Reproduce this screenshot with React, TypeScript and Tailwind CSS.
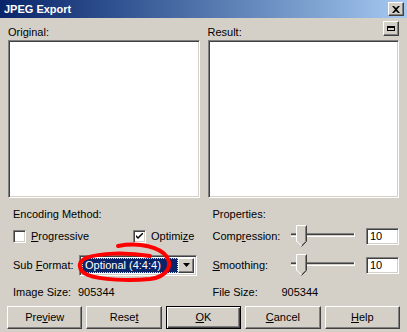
import React from 'react';

const raised =
    'bg-[#d4d0c8] border border-t-white border-l-white border-r-[#404040] border-b-[#404040] shadow-[inset_-1px_-1px_0_#808080,inset_1px_1px_0_#d4d0c8]';
const sunken =
    'bg-white border border-t-[#808080] border-l-[#808080] border-r-white border-b-white shadow-[inset_1px_1px_0_#404040,inset_-1px_-1px_0_#d4d0c8]';

function Checkbox({checked}: {checked?: boolean}) {
    return (
        <span className={`${sunken} w-[13px] h-[13px] flex items-center justify-center shrink-0`}>
            {checked && (
                <svg width="7" height="7" viewBox="0 0 7 7">
                    <path d="M0 2 L0 4 L2 6 L7 1 L7 -1 L2 4 Z" fill="#000"/>
                </svg>
            )}
        </span>
    );
}

function Slider() {
    return (
        <svg width="64" height="23" viewBox="0 0 64 23" className="shrink-0">
            {/* track */}
            <rect x="0" y="8" width="63" height="1" fill="#808080"/>
            <rect x="0" y="9" width="63" height="1" fill="#404040"/>
            <rect x="0" y="10" width="63" height="1" fill="#d4d0c8"/>
            <rect x="0" y="11" width="64" height="1" fill="#ffffff"/>
            <rect x="63" y="8" width="1" height="4" fill="#ffffff"/>
            {/* thumb */}
            <path d="M5 0 L15 0 L15 16 L10 21 L5 16 Z" fill="#d4d0c8"/>
            <path d="M5 16 L5 0 L15 0" stroke="#ffffff" strokeWidth="1" fill="none" transform="translate(0.5 0.5)"/>
            <path d="M15 0 L15 16 L10 21" stroke="#404040" strokeWidth="1" fill="none" transform="translate(0.5 0.5)"/>
            <path d="M14 1 L14 16 L10 20" stroke="#808080" strokeWidth="1" fill="none" transform="translate(0.5 0.5)"/>
            <path d="M5 16 L10 21" stroke="#ffffff" strokeWidth="1" fill="none" transform="translate(0.5 0)"/>
        </svg>
    );
}

function Button({children, isDefault}: {children: React.ReactNode; isDefault?: boolean}) {
    const cls = isDefault
        ? 'bg-[#d4d0c8] border border-black shadow-[inset_1px_1px_0_#ffffff,inset_-1px_-1px_0_#404040,inset_-2px_-2px_0_#808080]'
        : raised;
    return <div className={`${cls} h-[23px] flex items-center justify-center`}>{children}</div>;
}

export default function App() {
    return (
        <div
            className="relative w-[407px] h-[332px] overflow-hidden bg-[#d4d0c8] text-black text-[11px] leading-[13px]"
            style={{fontFamily: '"Liberation Sans", Arial, sans-serif'}}
        >
            {/* title bar */}
            <div className="h-[18px] flex items-center justify-between pl-[4px] pr-[3px] bg-gradient-to-r from-[#0a246a] to-[#a6caf0]">
                <span className="text-white font-bold">JPEG Export</span>
                <div className={`${raised} w-[16px] h-[14px] flex items-center justify-center`}>
                    <svg width="8" height="7" viewBox="0 0 8 7">
                        <path d="M0 0 L2 0 L4 2 L6 0 L8 0 L5 3.5 L8 7 L6 7 L4 5 L2 7 L0 7 L3 3.5 Z" fill="#000"/>
                    </svg>
                </div>
            </div>

            {/* previews */}
            <div className="grid grid-cols-2 gap-x-[8px] px-[8px]">
                <div className="flex flex-col">
                    <div className="h-[22px] flex items-end pb-[1px]">Original:</div>
                    <div className={`${sunken} h-[158px]`}/>
                </div>
                <div className="flex flex-col">
                    <div className="h-[22px] flex items-end justify-between pb-[1px]">
                        <span>Result:</span>
                        <div className={`${raised} w-[16px] h-[15px] mb-[3px] flex items-center justify-center self-end`}>
                            <span className="w-[8px] h-[5px] border border-black border-t-2"/>
                        </div>
                    </div>
                    <div className={`${sunken} h-[158px]`}/>
                </div>
            </div>

            {/* options */}
            <div className="grid grid-cols-2 gap-x-[8px] px-[8px] grid-rows-[24px_29px_28px_26px]">
                <div className="pl-[5px] flex items-end leading-[16px]">Encoding Method:</div>
                <div className="pl-[5px] flex items-end leading-[16px]">Properties:</div>

                <div className="pl-[5px] flex items-center">
                    <div className="w-[120px] flex items-center gap-[5px]">
                        <Checkbox/>
                        <span><u>P</u>rogressive</span>
                    </div>
                    <div className="flex items-center gap-[5px]">
                        <Checkbox checked/>
                        <span>Optimi<u>z</u>e</span>
                    </div>
                </div>
                <div className="pl-[5px] flex items-center">
                    <span className="w-[78px]">Comp<u>r</u>ession:</span>
                    <Slider/>
                    <div className={`${sunken} ml-auto w-[33px] h-[17px] flex items-center pl-[3px]`}>10</div>
                </div>

                <div className="pl-[5px] flex items-center">
                    <span className="w-[66px]">Sub <u>F</u>ormat:</span>
                    <div className={`${sunken} w-[118px] h-[21px] flex items-center p-[2px]`}>
                        <div className="flex-1 h-full bg-[#0a246a] text-white border border-dotted border-[#f5db95] flex items-center pl-[2px]">
                            Optional (4:4:4)
                        </div>
                        <div className={`${raised} w-[16px] h-full flex items-center justify-center`}>
                            <svg width="7" height="4" viewBox="0 0 7 4">
                                <path d="M0 0 L7 0 L3.5 4 Z" fill="#000"/>
                            </svg>
                        </div>
                    </div>
                </div>
                <div className="pl-[5px] flex items-center">
                    <span className="w-[78px]"><u>S</u>moothing:</span>
                    <Slider/>
                    <div className={`${sunken} ml-auto w-[33px] h-[17px] flex items-center pl-[3px]`}>10</div>
                </div>

                <div className="pl-[5px] flex items-center">
                    <span className="w-[65px]">Image Size:</span>
                    <span>905344</span>
                </div>
                <div className="pl-[5px] flex items-center">
                    <span className="w-[69px]">File Size:</span>
                    <span>905344</span>
                </div>
            </div>

            {/* buttons */}
            <div className="grid grid-cols-5 gap-x-[4px] px-[7px] mt-[1px]">
                <Button>Pre<u>v</u>iew</Button>
                <Button>Rese<u>t</u></Button>
                <Button isDefault><u>O</u>K</Button>
                <Button><u>C</u>ancel</Button>
                <Button><u>H</u>elp</Button>
            </div>

            {/* red annotation */}
            <svg
                className="absolute left-0 top-0 pointer-events-none"
                width="407"
                height="332"
                viewBox="0 0 407 332"
            >
                <path
                    d="M118 246 C140 242 160 247 167 257 C173 267 166 277 150 279 C130 281 100 280 88 275 C78 271 77 262 86 258 C100 253 125 252 150 256"
                    fill="none"
                    stroke="#ff0000"
                    strokeWidth="4"
                    strokeLinecap="round"
                />
            </svg>
        </div>
    );
}
